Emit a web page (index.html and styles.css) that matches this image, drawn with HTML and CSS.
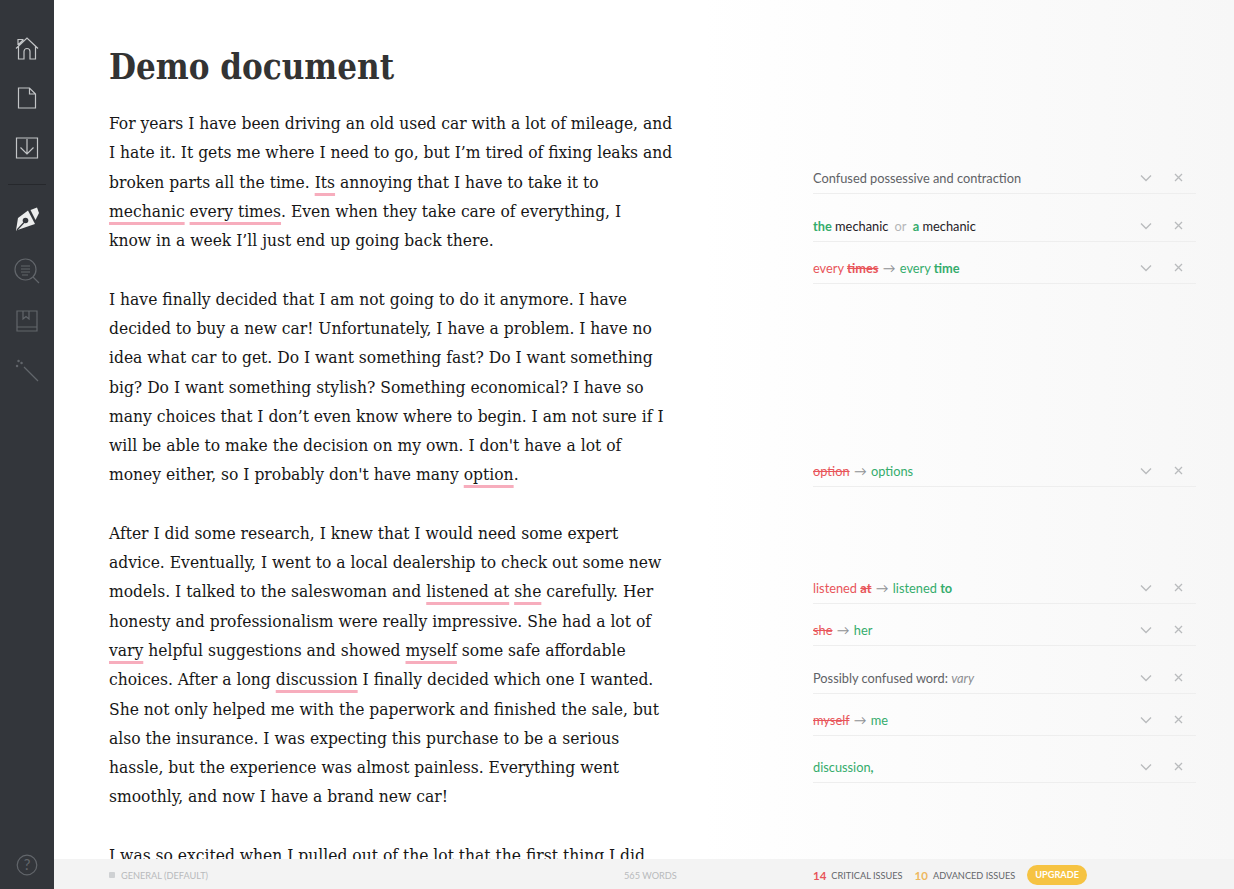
FILE: index.html
```html
<!DOCTYPE html>
<html lang="en">
<head>
<meta charset="utf-8">
<title>Demo document</title>
<link rel="stylesheet" href="styles.css">
</head>
<body>
<nav class="sidebar">
  <div class="nav-group">
    <svg class="icon light" viewBox="0 0 24 24" width="24" height="24"><path d="M1 12.500 12 2l11 10.500M3.500 10.500V23h5.500v-7.500a3 3 0 0 1 6 0V23h5.500V10.500M3 9V3.500h5.500M3 9l5.500-5.500"/></svg>
    <svg class="icon light" viewBox="0 0 24 24" width="24" height="24"><path d="M3.500 2h11l6 6v14h-17zM14.500 2v6h6"/></svg>
    <svg class="icon light" viewBox="0 0 24 24" width="24" height="24"><path d="M1.500 2h21v20h-21zM12 3v15M5.500 11.500 12 18l6.500-6.500"/></svg>
  </div>
  <div class="nav-rule"></div>
  <div class="nav-group">
    <svg class="icon pen" viewBox="0 0 24 26" width="24" height="26"><path class="fill" d="M1 24.500 3 12 13 4.500l7 13.500z"/><path class="fill" d="M15.500 4 22 1.500l2 5.500-3.500 7z"/><circle class="hole" cx="10.500" cy="14.500" r="2.800"/><path class="slit" d="M9 16.500 2 24"/></svg>
    <svg class="icon dim" viewBox="0 0 26 26" width="26" height="26"><circle cx="11.500" cy="11.500" r="10.500"/><path d="M19 19l6 6M7 8h9M7 11h9M7 14h9M8 17h6"/></svg>
    <svg class="icon dim" viewBox="0 1 24 22" width="24" height="22"><path d="M2 2h20v20H2zM2 18h20M8 2v8l3-2.500 3 2.500V2"/></svg>
    <svg class="icon dim" viewBox="0 0 24 24" width="24" height="24"><path d="M9 9l14 14"/><path class="spark" d="M3.500 3h.1M6.500 5h.1M2 8h.1"/></svg>
  </div>
  <svg class="icon dim help" viewBox="0 0 22 22" width="22" height="22"><circle cx="11" cy="11" r="9.800"/><text x="11" y="16" text-anchor="middle">?</text></svg>
</nav>
<div class="main">
  <div class="workspace">
    <article class="doc">
      <h1 class="doc-title">Demo document</h1>
      <p class="para">For years I have been driving an old used car with a lot of mileage, and<br>I hate it. It gets me where I need to go, but I’m tired of fixing leaks and<br>broken parts all the time. <span class="err">Its</span> annoying that I have to take it to<br><span class="err">mechanic</span> <span class="err">every times</span>. Even when they take care of everything, I<br>know in a week I’ll just end up going back there.</p>
      <p class="para">I have finally decided that I am not going to do it anymore. I have<br>decided to buy a new car! Unfortunately, I have a problem. I have no<br>idea what car to get. Do I want something fast? Do I want something<br>big? Do I want something stylish? Something economical? I have so<br>many choices that I don’t even know where to begin. I am not sure if I<br>will be able to make the decision on my own. I don't have a lot of<br>money either, so I probably don't have many <span class="err">option</span>.</p>
      <p class="para">After I did some research, I knew that I would need some expert<br>advice. Eventually, I went to a local dealership to check out some new<br>models. I talked to the saleswoman and <span class="err">listened at</span> <span class="err">she</span> carefully. Her<br>honesty and professionalism were really impressive. She had a lot of<br><span class="err">vary</span> helpful suggestions and showed <span class="err">myself</span> some safe affordable<br>choices. After a long <span class="err">discussion</span> I finally decided which one I wanted.<br>She not only helped me with the paperwork and finished the sale, but<br>also the insurance. I was expecting this purchase to be a serious<br>hassle, but the experience was almost painless. Everything went<br>smoothly, and now I have a brand new car!</p>
      <p class="para">I was so excited when I pulled out of the lot that the first thing I did</p>
    </article>
    <aside class="issues">
      <div class="issue"><span class="issue-text grey">Confused possessive and contraction</span><svg class="chev" viewBox="0 0 12 8" width="12" height="8"><path d="M1 1.500l5 5 5-5"/></svg><svg class="close" viewBox="0 0 9 9" width="9" height="9"><path d="M1 1l7 7M8 1l-7 7"/></svg></div>
      <div class="issue gap-s"><span class="issue-text"><b class="add">the</b> <span class="ink">mechanic</span> <span class="or">or</span> <b class="add">a</b> <span class="ink">mechanic</span></span><svg class="chev" viewBox="0 0 12 8" width="12" height="8"><path d="M1 1.500l5 5 5-5"/></svg><svg class="close" viewBox="0 0 9 9" width="9" height="9"><path d="M1 1l7 7M8 1l-7 7"/></svg></div>
      <div class="issue"><span class="issue-text"><span class="del">every <s>times</s></span> <span class="arrow">→</span> <span class="add">every <b>time</b></span></span><svg class="chev" viewBox="0 0 12 8" width="12" height="8"><path d="M1 1.500l5 5 5-5"/></svg><svg class="close" viewBox="0 0 9 9" width="9" height="9"><path d="M1 1l7 7M8 1l-7 7"/></svg></div>
      <div class="issue gap-xl"><span class="issue-text"><span class="del"><s class="plain">option</s></span> <span class="arrow">→</span> <span class="add">options</span></span><svg class="chev" viewBox="0 0 12 8" width="12" height="8"><path d="M1 1.500l5 5 5-5"/></svg><svg class="close" viewBox="0 0 9 9" width="9" height="9"><path d="M1 1l7 7M8 1l-7 7"/></svg></div>
      <div class="issue gap-l"><span class="issue-text"><span class="del">listened <s>at</s></span> <span class="arrow">→</span> <span class="add">listened <b>to</b></span></span><svg class="chev" viewBox="0 0 12 8" width="12" height="8"><path d="M1 1.500l5 5 5-5"/></svg><svg class="close" viewBox="0 0 9 9" width="9" height="9"><path d="M1 1l7 7M8 1l-7 7"/></svg></div>
      <div class="issue"><span class="issue-text"><span class="del"><s class="plain">she</s></span> <span class="arrow">→</span> <span class="add">her</span></span><svg class="chev" viewBox="0 0 12 8" width="12" height="8"><path d="M1 1.500l5 5 5-5"/></svg><svg class="close" viewBox="0 0 9 9" width="9" height="9"><path d="M1 1l7 7M8 1l-7 7"/></svg></div>
      <div class="issue gap-s"><span class="issue-text grey">Possibly confused word: <i class="quote">vary</i></span><svg class="chev" viewBox="0 0 12 8" width="12" height="8"><path d="M1 1.500l5 5 5-5"/></svg><svg class="close" viewBox="0 0 9 9" width="9" height="9"><path d="M1 1l7 7M8 1l-7 7"/></svg></div>
      <div class="issue"><span class="issue-text"><span class="del"><s class="plain">myself</s></span> <span class="arrow">→</span> <span class="add">me</span></span><svg class="chev" viewBox="0 0 12 8" width="12" height="8"><path d="M1 1.500l5 5 5-5"/></svg><svg class="close" viewBox="0 0 9 9" width="9" height="9"><path d="M1 1l7 7M8 1l-7 7"/></svg></div>
      <div class="issue gap-xs"><span class="issue-text"><span class="add">discussion<b>,</b></span></span><svg class="chev" viewBox="0 0 12 8" width="12" height="8"><path d="M1 1.500l5 5 5-5"/></svg><svg class="close" viewBox="0 0 9 9" width="9" height="9"><path d="M1 1l7 7M8 1l-7 7"/></svg></div>
    </aside>
  </div>
  <footer class="statusbar">
    <div class="status-left"><span class="mode-dot"></span>GENERAL (DEFAULT)</div>
    <div class="status-words">565 WORDS</div>
    <div class="status-right">
      <b class="count crit">14</b><span class="count-label">CRITICAL ISSUES</span>
      <b class="count adv">10</b><span class="count-label">ADVANCED ISSUES</span>
      <span class="upgrade">UPGRADE</span>
    </div>
  </footer>
</div>
</body>
</html>
```
FILE: styles.css
```css
* { box-sizing: border-box; }
html, body { height: 100%; margin: 0; }
body {
  display: flex;
  height: 889px;
  overflow: hidden;
  background: #fff;
  font-family: "Lato", sans-serif;
}

/* Sidebar */
.sidebar {
  flex: 0 0 54px;
  display: flex;
  flex-direction: column;
  align-items: center;
  padding: 36px 0 13px;
  background: #33363b;
}
.nav-group { display: flex; flex-direction: column; align-items: center; gap: 26px; }
.nav-rule { align-self: stretch; height: 1px; margin: 24px 8px 21px; background: #26282c; }
.icon { display: block; fill: none; stroke-width: 1.2; }
.icon.light { stroke: #c3c5c7; }
.icon.dim { stroke: #62666b; }
.icon.pen .fill { fill: #eceded; stroke: none; }
.icon.pen .hole { fill: #33363b; stroke: none; }
.icon.pen .slit { stroke: #33363b; stroke-width: 1.2; }
.icon .spark { stroke-width: 2.400; stroke-linecap: round; }
.help { margin-top: auto; }
.help text { fill: #62666b; stroke: none; font: 15px "Lato", sans-serif; }

/* Main */
.main { flex: 1; min-width: 0; display: flex; flex-direction: column; }
.workspace {
  flex: 1;
  min-height: 0;
  display: flex;
  overflow: hidden;
  background: linear-gradient(to right, #fff 55%, #f7f7f7 100%);
}
.doc { flex: 0 0 759px; padding: 39px 0 0 55px; }
.doc-title {
  margin: 0 0 14px;
  font: 700 34.600px/56px "DejaVu Serif Condensed", "DejaVu Serif", serif;
  color: #333;
}
.para {
  margin: 0 0 29.280px;
  font: 17.300px/29.280px "DejaVu Serif Condensed", "DejaVu Serif", serif;
  white-space: nowrap;
  color: #161616;
}
.err {
  text-decoration: underline #f7adbd 2.500px;
  text-underline-offset: 5px;
  text-decoration-skip-ink: none;
}

/* Issues */
.issues { flex: 1; display: flex; flex-direction: column; padding: 163px 38px 0 0; }
.issue {
  flex: 0 0 31px;
  display: flex;
  align-items: center;
  margin-bottom: 11px;
  border-bottom: 1px solid #eeeeee;
  font-size: 12.800px;
  padding-bottom: 1px;
}
.gap-xs { margin-top: 5px; }
.gap-s { margin-top: 6px; }
.gap-l { margin-top: 75px; }
.gap-xl { margin-top: 161px; }
.issue-text { flex: 1; }
.issue-text b { font-weight: 700; }
.grey { color: #5f6266; }
.ink { color: #1f2126; }
.add { color: #35ac6c; }
.del { color: #e8555a; }
.del s { font-weight: 700; }
.del s.plain { font-weight: 400; }
.or { color: #b4b6b8; margin: 0 3px; }
.arrow { color: #909295; margin: 0 1px; }
.quote { color: #8c8e91; }
.chev { fill: none; stroke: #b9bbbd; stroke-width: 1.300; margin-right: 21.500px; }
.close { fill: none; stroke: #b9bbbd; stroke-width: 1.300; margin-right: 13.500px; }

/* Status bar */
.statusbar {
  flex: 0 0 30px;
  display: flex;
  align-items: center;
  padding: 2px 0 0 55px;
  background: #f3f3f3;
  font-size: 9.200px;
  color: #b8babc;
}
.status-left { flex: 0 0 515px; display: flex; align-items: center; }
.mode-dot { width: 6px; height: 6px; margin-right: 6px; background: #cfd1d3; border-radius: 1px; }
.status-words { flex: 0 0 189px; }
.status-right { display: flex; align-items: center; color: #63666a; }
.count { font-size: 11.500px; margin-right: 5px; }
.crit { color: #e8535a; }
.adv { color: #eeb860; }
.count-label { margin-right: 12px; }
.upgrade {
  padding: 0 8px;
  height: 20px;
  line-height: 20px;
  border-radius: 10px;
  background: #f6c342;
  color: #fff;
  font-weight: 700;
}
```
